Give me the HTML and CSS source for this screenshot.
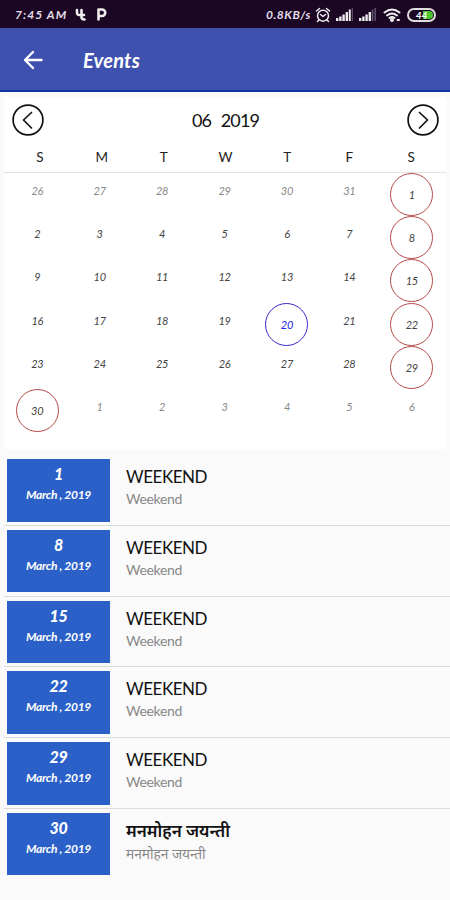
FILE: index.html
```html
<!DOCTYPE html>
<html lang="en">
<head>
<meta charset="utf-8">
<title>Events</title>
<link rel="stylesheet" href="styles.css">
</head>
<body>
<div class="status">
  <span class="time">7:45 AM</span>
  <svg class="s-four" width="12" height="15" viewBox="0 0 12 15"><path d="M2 3v2.500q0 3 3 2.500M6.500 3v7q0 2.500 3 2.500M5 8h4" /></svg>
  <svg class="s-p" width="11" height="15" viewBox="0 0 11 15"><path d="M2.500 12.500V2.500h3.500a3 3 0 0 1 0 6.500H3" /></svg>
  <span class="speed">0.8KB/s</span>
  <svg class="s-alarm" width="16" height="16" viewBox="0 0 16 16"><circle cx="8" cy="8.700" r="5.500"/><path d="M1.500 4l3-2.500M14.500 4l-3-2.500M5.500 7.500L8 9.500l2.500-2M4 13l-1.500 1.500M12 13l1.500 1.500"/></svg>
  <svg class="s-sig1" width="17" height="13" viewBox="0 0 17 13"><path d="M0 10h2.400v3H0zM3.200 8.500h2.400V13H3.200zM6.400 6.500h2.400V13H6.400zM9.600 4H12v9H9.600zM12.800 1.500h2V13h-2z"/><path class="dim" d="M15.800 0h1v13h-1z"/></svg>
  <svg class="s-sig2" width="17" height="13" viewBox="0 0 17 13"><path d="M0 10h2.400v3H0zM3.200 8.500h2.400V13H3.200zM6.400 6.500h2.400V13H6.400zM9.600 4H12v9H9.600z"/><path class="dim" d="M12.800 1.500h1.500V13h-1.500zM15.500 0h1.300v13h-1.300z"/></svg>
  <svg class="s-wifi" width="19" height="14" viewBox="0 0 19 14"><path d="M1.500 4.500q7.500-6 15 0M4 7.500q5-4 10 0M6.500 10q2.500-2 5 0"/><circle cx="9" cy="12" r="1"/><path d="M14.500 12h1.500"/></svg>
  <span class="battery"><span class="cell">44</span></span>
</div>
<header class="appbar">
  <svg width="20" height="20" viewBox="0 0 20 20"><path d="M18.500 10H2M10 2l-8 8 8 8"/></svg>
  <h1>Events</h1>
</header>
<section class="calendar">
  <div class="month">
    <svg width="32" height="32" viewBox="0 0 32 32"><circle cx="16" cy="16" r="14.900"/><path d="M19.500 8.500L11.500 16l8 8"/></svg>
    <span>06 2019</span>
    <svg width="32" height="32" viewBox="0 0 32 32"><circle cx="16" cy="16" r="14.900"/><path d="M12.500 8.500L20.500 16l-8 8"/></svg>
  </div>
  <div class="week"><span>S</span><span>M</span><span>T</span><span>W</span><span>T</span><span>F</span><span>S</span></div>
  <div class="days">
    <span class="out">26</span><span class="out">27</span><span class="out">28</span><span class="out">29</span><span class="out">30</span><span class="out">31</span><span class="ring">1</span>
    <span>2</span><span>3</span><span>4</span><span>5</span><span>6</span><span>7</span><span class="ring">8</span>
    <span>9</span><span>10</span><span>11</span><span>12</span><span>13</span><span>14</span><span class="ring">15</span>
    <span>16</span><span>17</span><span>18</span><span>19</span><span class="ring today">20</span><span>21</span><span class="ring">22</span>
    <span>23</span><span>24</span><span>25</span><span>26</span><span>27</span><span>28</span><span class="ring">29</span>
    <span class="ring">30</span><span class="out">1</span><span class="out">2</span><span class="out">3</span><span class="out">4</span><span class="out">5</span><span class="out">6</span>
  </div>
</section>
<main class="events">
  <article><div class="date"><b>1</b><span>March , 2019</span></div><div class="info"><h2>WEEKEND</h2><p>Weekend</p></div></article>
  <article><div class="date"><b>8</b><span>March , 2019</span></div><div class="info"><h2>WEEKEND</h2><p>Weekend</p></div></article>
  <article><div class="date"><b>15</b><span>March , 2019</span></div><div class="info"><h2>WEEKEND</h2><p>Weekend</p></div></article>
  <article><div class="date"><b>22</b><span>March , 2019</span></div><div class="info"><h2>WEEKEND</h2><p>Weekend</p></div></article>
  <article><div class="date"><b>29</b><span>March , 2019</span></div><div class="info"><h2>WEEKEND</h2><p>Weekend</p></div></article>
  <article><div class="date"><b>30</b><span>March , 2019</span></div><div class="info hindi" lang="hi"><h2>मनमोहन जयन्ती</h2><p>मनमोहन जयन्ती</p></div></article>
</main>
</body>
</html>
```
FILE: styles.css
```css
* { box-sizing: border-box; }
body { margin: 0; width: 450px; height: 900px; overflow: hidden; background: #fafafa; color: #111; font-family: Lato, "Noto Sans", sans-serif; }
h1, h2, p { margin: 0; }
svg { display: block; flex: none; fill: none; stroke-linecap: round; stroke-linejoin: round; }

.status { height: 28px; background: #1b0624; color: #e4dfe8; display: flex; align-items: center; padding: 1px 14px 0 15px; font: italic 700 12px/16px Lato, sans-serif; white-space: nowrap; }
.status svg { stroke: #eee; stroke-width: 1.5; }
.time { width: 60px; letter-spacing: 1.1px; }
.status .s-four { stroke-width: 2.600; }
.status .s-p { margin-left: 9px; stroke-width: 2.600; }
.speed { width: 47px; margin-left: 159px; letter-spacing: .5px; }
.s-alarm { margin-left: 2px; }
.status .s-sig1, .status .s-sig2 { fill: #eee; stroke: none; }
.s-sig1 { margin-left: 5px; }
.s-sig2 { margin-left: 6px; }
.dim { fill: #6b5c73; }
.status .s-wifi { margin-left: 7px; stroke-width: 2; }
.battery { width: 29px; height: 14px; margin-left: 5px; padding: 1px; border: 2px solid #ddd; border-radius: 7px; flex: none; }
.cell { display: block; height: 8px; border-radius: 4px; background: linear-gradient(90deg, #1b0624 55%, #4bc52b 55%); color: #fff; font: italic 700 10px/8px Lato, sans-serif; text-align: center; }

.appbar { height: 64px; background: #3f51af; border-bottom: 2px solid #1135a0; display: flex; align-items: center; padding: 2px 0 0 23px; color: #fff; }
.appbar svg { stroke: #fff; stroke-width: 2.400; }
.appbar h1 { margin-left: 40px; font: italic 700 20px/26px Lato, sans-serif; letter-spacing: .2px; }

.calendar { margin: 5px 4px 0; height: 352px; background: #fff; }
.month { height: 46px; padding: 0 7px 0 8px; display: flex; align-items: center; justify-content: space-between; font-size: 18px; word-spacing: 6px; letter-spacing: -.9px; }
.month svg { stroke: #111; stroke-width: 1.700; }
.week { height: 29.500px; border-bottom: 1.5px solid #e2e2e2; padding: 6px 4px 0 5px; display: grid; grid-template-columns: repeat(7, 1fr); text-align: center; font-size: 13.500px; line-height: 17px; color: #222; }
.days { padding: 0 3px 0 2px; display: grid; grid-template-columns: repeat(7, 1fr); grid-auto-rows: 43.4px; justify-items: center; margin-top: -3px; font-size: 11px; line-height: 14px; color: #444; letter-spacing: -.3px; }
.days span { padding-top: 14px; font-style: italic; }
.days .out { color: #888; }
.days .ring { width: 43px; height: 43px; margin-top: 3px; border: 1px solid #b54a48; border-radius: 50%; text-align: center; }
.days .today { color: #2020e0; border-color: #3529c8; }

.events { padding: 6px 0 0 4px; }
.events article { height: 70.8px; padding: 4px 0 0 3px; display: flex; border-bottom: 1px solid #dadada; }
.events article:last-child { border-bottom: 0; }
.date { width: 103px; height: 62.500px; background: #2a60c8; color: #fff; display: flex; flex-direction: column; align-items: center; padding-top: 5px; font-style: italic; font-weight: 700; }
.date b { font-size: 16px; line-height: 20px; letter-spacing: -.4px; }
.date span { font-size: 12px; line-height: 21px; white-space: nowrap; letter-spacing: -.3px; }
.info { margin-left: 16px; padding-top: 7px; }
.info h2 { font-size: 17px; line-height: 22px; font-weight: 400; letter-spacing: -.45px; }
.info p { margin-top: 0; font-size: 14px; line-height: 22px; color: #888; letter-spacing: -.3px; }
.hindi h2 { font-size: 17px; font-weight: 600; letter-spacing: 0; }
.hindi p { margin-top: 1px; font-size: 13.700px; letter-spacing: 0; }
```
